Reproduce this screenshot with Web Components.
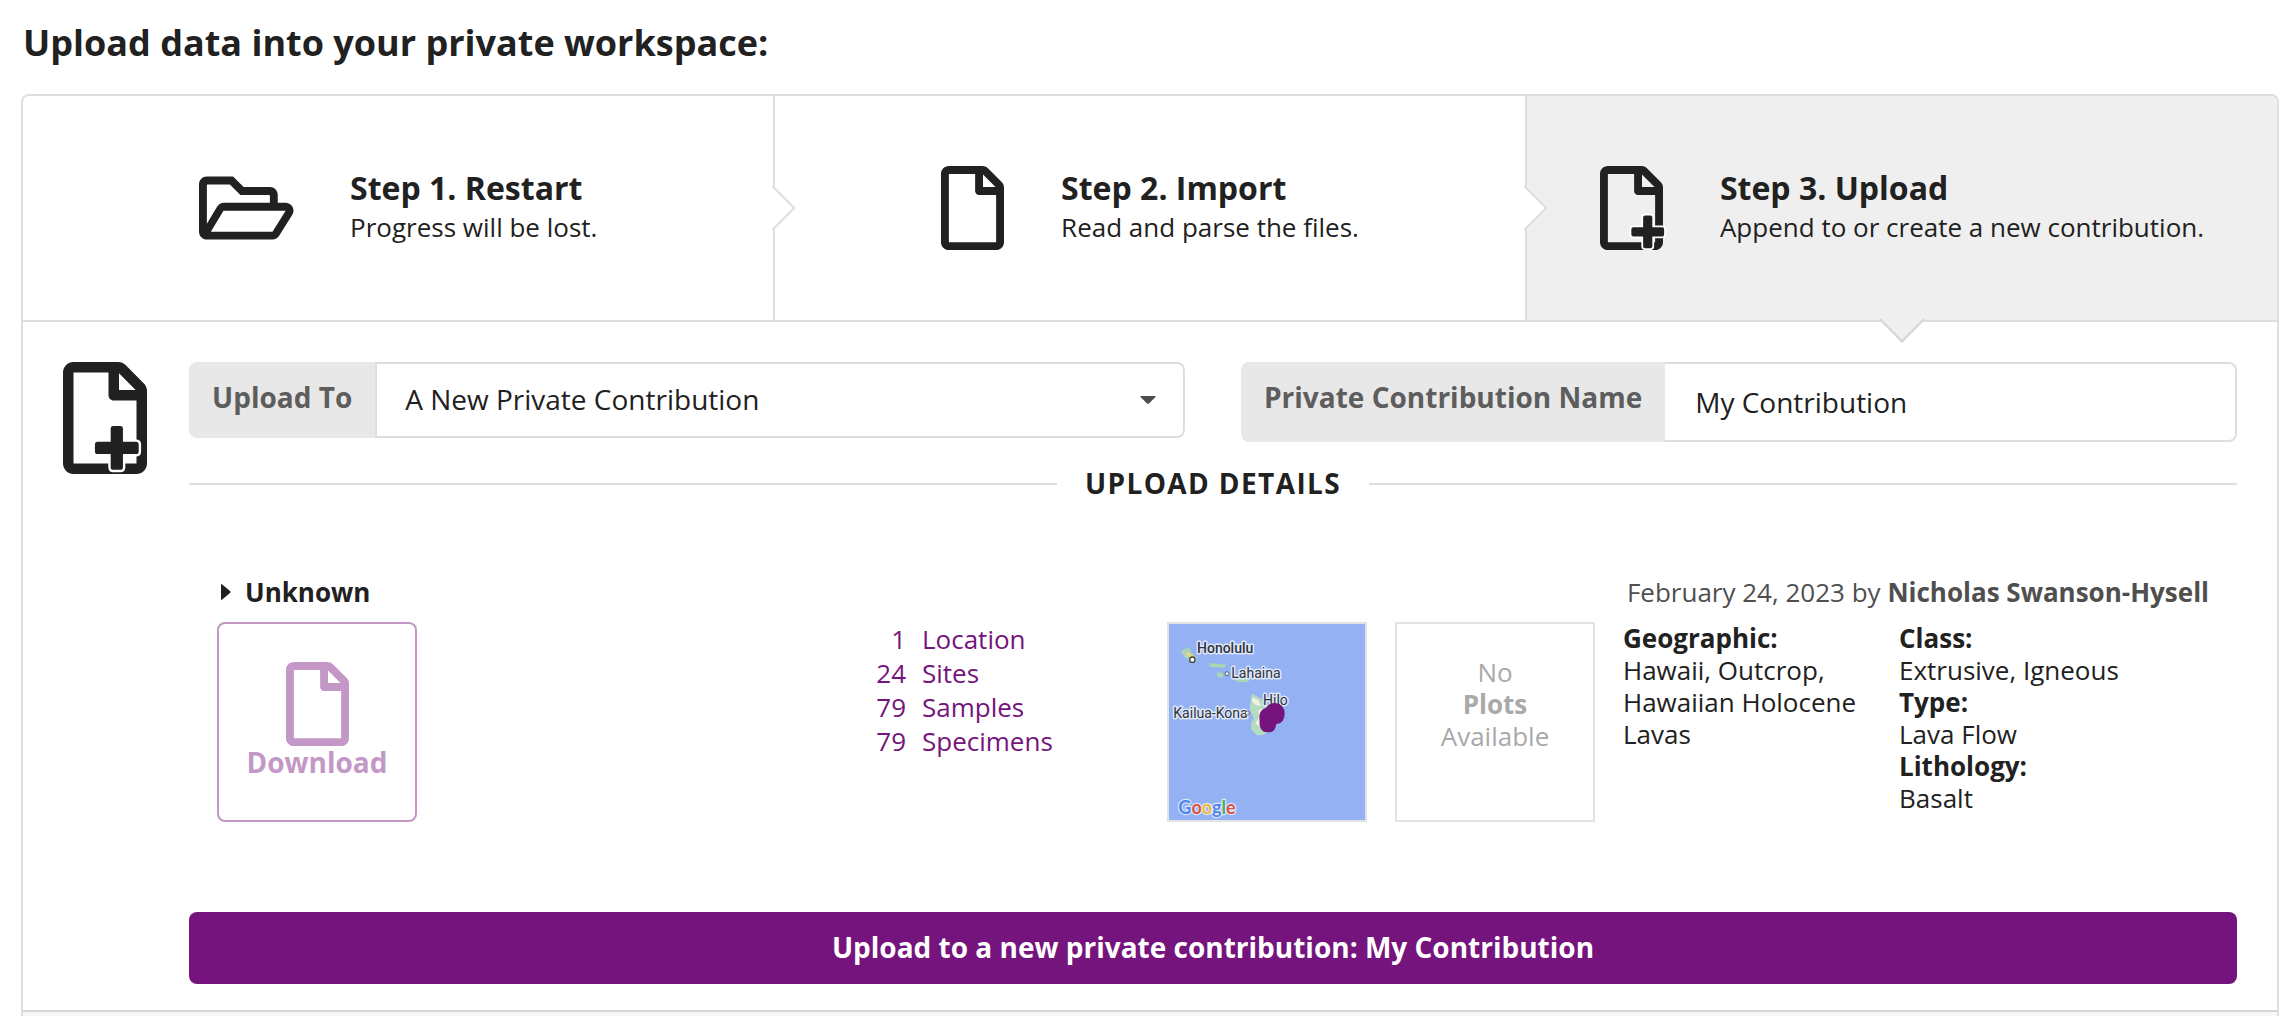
<!DOCTYPE html>
<html lang="en">
<head>
<meta charset="utf-8">
<title>Upload data</title>
<style>
  body { margin: 0; background: #fff; color: #212121; font: 26px/32px "Open Sans", "Noto Sans", sans-serif; }
</style>
</head>
<body>
<upload-page>
  <step-bar slot="steps">
    <step-item icon="folder" heading="Step 1. Restart">Progress will be lost.</step-item>
    <step-item icon="file" heading="Step 2. Import">Read and parse the files.</step-item>
    <step-item icon="file-plus" heading="Step 3. Upload" active>Append to or create a new contribution.</step-item>
  </step-bar>
  <upload-form></upload-form>
</upload-page>

<script>
const FILE = 'M369.9 97.9L286 14C277 5 264.8-.1 252.1-.1H48C21.5 0 0 21.5 0 48v416c0 26.5 21.5 48 48 48h288c26.5 0 48-21.5 48-48V131.9c0-12.7-5.1-25-14.1-34zM332.1 128H256V51.9l76.1 76.1zM48 464V48h160v104c0 13.3 10.7 24 24 24h104v288H48z';
const FOLDER = 'M527.9 224H480v-48c0-26.5-21.5-48-48-48H272l-64-64H48C21.5 64 0 85.5 0 112v288c0 26.5 21.5 48 48 48h400c16.5 0 31.9-8.5 40.7-22.6l79.9-128c20-31.9-3-73.4-40.7-73.4zM48 118c0-3.3 2.7-6 6-6h134.1l64 64H426c3.3 0 6 2.7 6 6v42H152c-16.8 0-32.4 8.8-41.1 23.2L48 351.4zm400 282H72l77.2-128H528z';
const PLUS = 'M84 0h32q12 0 12 12v60h60q12 0 12 12v32q0 12-12 12h-60v60q0 12-12 12H84q-12 0-12-12v-60H12q-12 0-12-12V84q0-12 12-12h60V12q0-12 12-12z';
const plus = (x, y) => `<path transform="translate(${x} ${y})" d="${PLUS}" stroke="#fff" stroke-width="22" stroke-linejoin="round" paint-order="stroke"/>`;

const define = (name, html) => customElements.define(name, class extends HTMLElement {
  constructor() {
    super();
    this.attachShadow({ mode: 'open' });
  }
  connectedCallback() {
    this.shadowRoot.innerHTML = '<style>*{box-sizing:border-box}</style>' + (typeof html === 'function' ? html(this) : html);
  }
});

/* Icon: its height comes from --icon-size, its width from the glyph */
define('ui-icon', el => {
  const glyphs = {
    'folder': [576, `<path d="${FOLDER}"/>`],
    'file': [384, `<path d="${FILE}"/>`],
    'file-plus': [384, `<path d="${FILE}"/>${plus(191, 301)}`],
    'file-plus-inset': [384, `<path d="${FILE}"/>${plus(146, 293)}`]
  };
  const [w, body] = glyphs[el.getAttribute('name')];
  return `<style>
    :host { display: block; flex: none; }
    svg { display: block; height: var(--icon-size, 84px); width: auto; overflow: visible; fill: currentColor; }
  </style><svg viewBox="0 0 ${w} 512" aria-hidden="true">${body}</svg>`;
});

define('upload-page', `<style>
  :host { display: flex; flex-direction: column; box-sizing: border-box; height: 100vh; overflow: hidden; padding: 19px 15px 0 21px; }
  h1 { margin: 0 0 27px; padding-left: 2px; font-size: 36px; line-height: 48px; }
  main { display: flex; flex-direction: column; flex: 1; border: 2px solid #dedede; border-bottom: 0; border-radius: 8px 8px 0 0; }
  .next { flex: 1; border-top: 2px solid #d6d6d6; background: #f7f7f7; }
</style>
<h1>Upload data into your private workspace:</h1>
<main><slot name="steps"></slot><slot></slot><div class="next"></div></main>`);

define('step-bar', `<style>
  :host { display: flex; border-bottom: 2px solid #dedede; }
</style><slot></slot>`);

define('step-item', el => `<style>
  :host { display: flex; flex: 1 1 0; align-items: center; justify-content: center; gap: 57px; min-height: 224px; position: relative; border-right: 2px solid #dedede; }
  :host([active]) { background: #efefef; border-right: 0; border-top-right-radius: 6px; }
  h2 { margin: 0; font-size: 32px; line-height: 38px; }
  p { margin: 0; line-height: 40px; }
  .arrow { position: absolute; z-index: 1; width: 32px; height: 32px; box-sizing: border-box; background: #fff; border: solid #dedede; border-width: 0 2px 2px 0; top: 50%; left: 100%; transform: translate(-50%, -50%) rotate(-45deg); }
  :host([active]) .arrow { background: #efefef; border-color: #d4d4d5; top: 100%; left: 50%; transform: translate(-50%, -50%) rotate(45deg); }
</style>
<ui-icon name="${el.getAttribute('icon')}"></ui-icon>
<div><h2>${el.getAttribute('heading')}</h2><p><slot></slot></p></div>
<span class="arrow"></span>`);

define('upload-form', `<style>
  :host { display: flex; gap: 42px; padding: 40px 40px 26px; }
  .icon { --icon-size: 112px; }
  .body { flex: 1; min-width: 0; display: flex; flex-direction: column; }
  .fields { display: flex; gap: 56px; align-items: flex-start; }
  .submit { margin-top: 90px; height: 72px; padding: 0 0 2px; border: 0; border-radius: 8px; background: #75147c; color: #fff; font: bold 28px/36px "Open Sans", "Noto Sans", sans-serif; }
</style>
<ui-icon class="icon" name="file-plus-inset"></ui-icon>
<div class="body">
  <div class="fields"><target-field></target-field><name-field></name-field></div>
  <title-divider>UPLOAD DETAILS</title-divider>
  <contribution-item></contribution-item>
  <button class="submit" type="button">Upload to a new private contribution: My Contribution</button>
</div>`);

const FIELD = `
  :host { display: flex; flex: 1 1 0; min-width: 0; font-size: 28px; }
  label { flex: none; padding: 0 23px; line-height: 70px; font-weight: bold; color: #5d5d5d; background: #e8e8e8; border-radius: 8px 0 0 8px; }
  select, input { appearance: none; flex: 1; width: 100%; min-width: 0; margin: 0; padding: 0 28px; font: inherit; color: #212121; background: #fff; border: 2px solid #dedede; border-radius: 0 8px 8px 0; outline: 0; }`;

define('target-field', `<style>${FIELD}
  .box { display: grid; flex: 1; align-items: center; }
  select, svg { grid-area: 1 / 1; }
  select { height: 76px; padding-bottom: 2px; }
  svg { justify-self: end; margin-right: 29px; fill: #4d4d4d; pointer-events: none; }
</style>
<label for="target">Upload To</label>
<div class="box">
  <select id="target"><option>A New Private Contribution</option></select>
  <svg width="16" height="8" viewBox="0 0 16 8"><path d="M1 0h14q1 0 .5 1L9 7.500q-1 .8-2 0L.5 1Q0 0 1 0z"/></svg>
</div>`);

define('name-field', `<style>${FIELD}
  input { height: 80px; border-left: 0; padding-left: 30px; }
</style>
<label for="name">Private Contribution Name</label>
<input id="name" type="text" value="My Contribution">`);

define('title-divider', `<style>
  :host { display: flex; align-items: center; gap: 28px; margin-top: 22px; }
  h3 { margin: 0; padding-bottom: 2px; font-size: 28px; line-height: 38px; letter-spacing: .05em; }
  i { flex: 1; height: 2px; background: #dedede; }
</style><i></i><h3><slot></slot></h3><i></i>`);

define('contribution-item', `<style>
  :host { display: block; margin-top: 70px; padding: 0 28px; }
  header { display: flex; justify-content: space-between; line-height: 36px; margin-bottom: 12px; }
  .title { display: flex; align-items: center; gap: 14px; font-weight: bold; }
  .title svg { margin-left: 4px; fill: #212121; }
  .by { color: #4f4f4f; }
  .row { display: grid; grid-template-columns: 200px 1fr 200px 200px 248px 310px; gap: 28px; align-items: start; }
  .download { display: flex; flex-direction: column; align-items: center; width: 200px; height: 200px; padding: 38px 0 0; background: none; border: 2px solid #c398c6; border-radius: 8px; color: #c398c6; font: bold 28px/32px "Open Sans", "Noto Sans", sans-serif; }
  .counts { border-spacing: 0; width: 100%; color: #75147c; line-height: 34px; }
  .counts td { padding: 0; }
  .counts td:first-child { text-align: right; padding-right: 16px; }
  .counts td:last-child { width: 217px; }
  .plots { height: 200px; padding-top: 32px; border: 2px solid #e3e3e3; text-align: center; color: #a9a9a9; }
  dl, dt, dd { margin: 0; }
  dt { font-weight: bold; }
</style>
<header>
  <span class="title"><svg width="10" height="16" viewBox="0 0 10 16"><path d="M0 1q0-1.500 1.200-.5l7.800 6.500q1 1 0 2l-7.800 6.500q-1.200 1-1.200-.5z"/></svg>Unknown</span>
  <span class="by">February 24, 2023 by <b>Nicholas Swanson-Hysell</b></span>
</header>
<div class="row">
  <button class="download" type="button"><ui-icon name="file"></ui-icon>Download</button>
  <table class="counts">
    <tr><td>1</td><td>Location</td></tr>
    <tr><td>24</td><td>Sites</td></tr>
    <tr><td>79</td><td>Samples</td></tr>
    <tr><td>79</td><td>Specimens</td></tr>
  </table>
  <site-map></site-map>
  <div class="plots">No<br><b>Plots</b><br>Available</div>
  <dl><dt>Geographic:</dt><dd>Hawaii, Outcrop, Hawaiian Holocene Lavas</dd></dl>
  <dl><dt>Class:</dt><dd>Extrusive, Igneous</dd><dt>Type:</dt><dd>Lava Flow</dd><dt>Lithology:</dt><dd>Basalt</dd></dl>
</div>`);

define('site-map', `<style>
  :host { display: block; box-sizing: border-box; height: 200px; border: 2px solid #e3e3e3; background: #94b2f3; }
  svg { display: block; }
  text { font-family: Roboto, sans-serif; font-size: 42px; fill: #2f3440; stroke: #dfe7fa; stroke-width: 9px; stroke-linejoin: round; paint-order: stroke; }
  .city { font-weight: 500; }
  .logo { font-family: Lato, sans-serif; font-size: 54px; stroke-width: 7px; font-weight: bold; }
</style>
<svg width="196" height="196" viewBox="0 0 588 588" role="img" aria-label="Map of Hawaii">
  <path d="M35 82l24-13 10 18 14 12v10H64L47 100z" fill="#a9d5b4"/>
  <path d="M50 88l8-3 18 18-8 4z" fill="#f8d384"/>
  <path d="M121 117l22 2 30 3-7 9-44-3zM143 145l15 1 7 8-9 8-10-3zM177 179l10-2-2 4zM185 150l22 5 34 10-3 9-34 1-9-16z" fill="#a9d5b4"/>
  <path d="M248 209l20 10 18 14 40 30 0 40-30 20-14 10-18 1-18-18 1-22 8-10-13-30z" fill="#b4dcc0"/>
  <path d="M250 220l18 8 8 18-14-2-12-10zM268 258l14-4v40l-14 12-8-8 10-18z" fill="#f2f1e6"/>
  <text class="city" x="84" y="88">Honolulu</text>
  <circle cx="70" cy="107" r="8" fill="#fff" stroke="#444" stroke-width="4"/>
  <text x="187" y="163">Lahaina</text>
  <circle cx="174" cy="149" r="6" fill="#e8eaf0" stroke="#666" stroke-width="3"/>
  <text x="13" y="281">Kailua-Kona</text>
  <circle cx="235" cy="267" r="6" fill="#e8eaf0" stroke="#666" stroke-width="3"/>
  <text x="282" y="242">Hilo</text>
  <path d="M271 276q2-20 20-25 10-15 28-14 28 3 28 33-1 28-25 31-3 24-23 24-24 1-27-23z" fill="#75147c"/>
  <text class="logo" x="28" y="569"><tspan fill="#4f86ec">G</tspan><tspan fill="#dc5044">o</tspan><tspan fill="#efbb3a">o</tspan><tspan fill="#4f86ec">g</tspan><tspan fill="#4fa863">l</tspan><tspan fill="#dc5044">e</tspan></text>
</svg>`);
</script>
</body>
</html>
